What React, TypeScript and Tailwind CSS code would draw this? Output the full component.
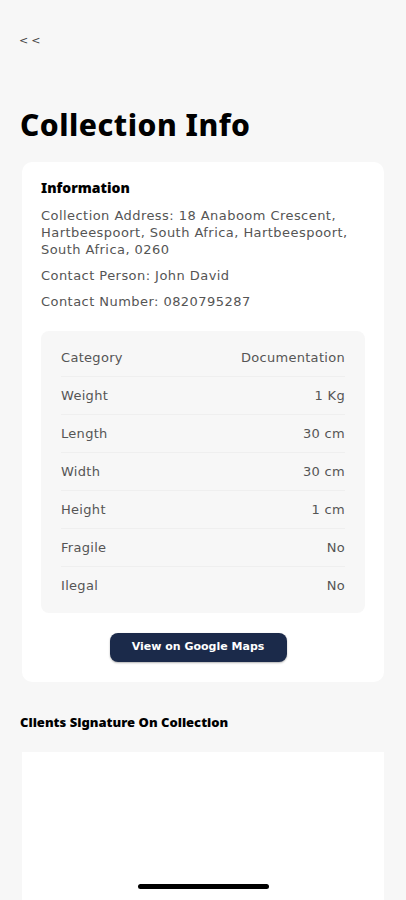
const details = [
  { label: 'Category', value: 'Documentation' },
  { label: 'Weight', value: '1 Kg' },
  { label: 'Length', value: '30 cm' },
  { label: 'Width', value: '30 cm' },
  { label: 'Height', value: '1 cm' },
  { label: 'Fragile', value: 'No' },
  { label: 'Ilegal', value: 'No' },
]

export default function App() {
  return (
    <div className="min-h-[900px] h-[900px] overflow-hidden bg-[#f7f7f7] font-['DejaVu_Sans',sans-serif] relative">
      <div className="pt-[35px] pl-[19px] text-[11px] text-[#444] tracking-[3px] leading-[12px]">
        {'<<'}
      </div>

      <h1 className="mt-[58px] px-[20px] font-['Noto_Sans',sans-serif] font-extrabold text-[30px] leading-[40px] tracking-[0.5px] text-black">
        Collection Info
      </h1>

      <div className="mx-[22px] mt-[17px] bg-white rounded-[10px] pt-[17px] pb-[20px] px-[19px]">
        <h2 className="font-['Noto_Sans',sans-serif] font-black text-[14px] leading-[18px] text-black">
          Information
        </h2>
        <p className="mt-[10px] text-[13px] leading-[17px] tracking-[0.45px] text-[#555]">
          Collection Address: 18 Anaboom Crescent, Hartbeespoort, South Africa, Hartbeespoort, South Africa, 0260
        </p>
        <p className="mt-[9px] text-[13px] leading-[17px] tracking-[0.45px] text-[#555]">Contact Person: John David</p>
        <p className="mt-[9px] text-[13px] leading-[17px] tracking-[0.45px] text-[#555]">Contact Number: 0820795287</p>

        <div className="mt-[21px] bg-[#f7f7f7] rounded-[8px] px-[20px] py-[8px]">
          {details.map((d, i) => (
            <div
              key={d.label}
              className={
                'flex items-center justify-between h-[38px] text-[13px] tracking-[0.3px] text-[#555] ' +
                (i < details.length - 1 ? 'border-b border-[#efefef]' : '')
              }
            >
              <span>{d.label}</span>
              <span>{d.value}</span>
            </div>
          ))}
        </div>

        <div className="flex justify-center mt-[20px] pr-[10px]">
          <button className="w-[177px] h-[29px] rounded-[8px] bg-[#1b2a4a] text-white text-[11px] font-bold shadow-[0_1px_2px_rgba(0,0,0,0.3)]">
            View on Google Maps
          </button>
        </div>
      </div>

      <h2 className="mt-[32px] px-[20px] font-['Noto_Sans',sans-serif] font-black text-[13px] leading-[16px] text-black">
        Clients Signature On Collection
      </h2>

      <div className="mx-[22px] mt-[22px] h-[150px] bg-white" />

      <div className="absolute left-[138px] top-[884px] w-[131px] h-[5px] rounded-full bg-black" />
    </div>
  )
}
